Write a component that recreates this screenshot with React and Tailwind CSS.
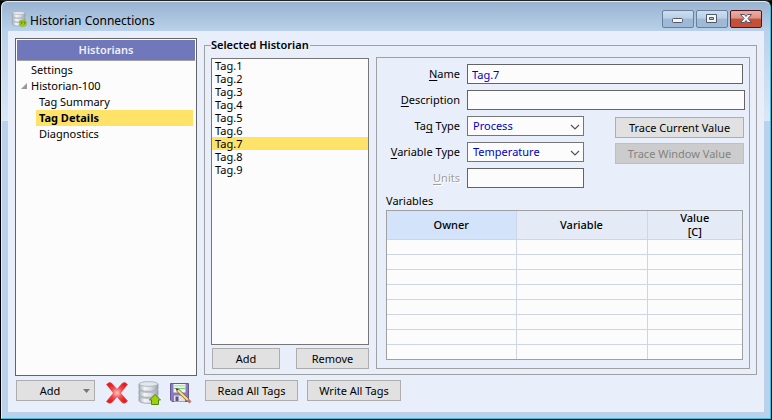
import React from "react";

const BTN = "h-[21px] border border-[#adadad] bg-[#e1e1e1] text-center leading-[19px]";
const FIELD = "h-5 min-w-0 border border-[#646464] bg-[#fcfcfc] px-1 text-[#0000c8] outline-none";

function DatabaseIcon({ className, badge }) {
  return (
    <svg className={className} viewBox="0 0 24 24" aria-hidden="true">
      <defs>
        <linearGradient id="metal" x1="0" x2="1">
          <stop offset="0" stopColor="#aab1ba" />
          <stop offset="0.3" stopColor="#f4f6f9" />
          <stop offset="0.65" stopColor="#d6dbe1" />
          <stop offset="1" stopColor="#9aa2ac" />
        </linearGradient>
      </defs>
      {[16, 10, 4].map((y) => (
        <g key={y}>
          <path d={`M2 ${y - 1}v4.500c0 1.700 4.200 2.800 9.500 2.800s9.500-1.100 9.500-2.800v-4.500z`} fill="url(#metal)" stroke="#9098a3" strokeWidth="0.8" />
          <ellipse cx="11.5" cy={y - 1} rx="9.5" ry="2.4" fill="#e3e7eb" stroke="#9aa2ac" strokeWidth="0.7" />
        </g>
      ))}
      {badge === "up" ? (
        <path d="M18 13.500l5.500 5.500h-2v4.500h-7v-4.500h-2z" fill="#9bd10d" stroke="#55860b" strokeWidth="1" />
      ) : (
        <g>
          <rect x="12.500" y="14" width="10.500" height="9" rx="3" fill="#a4cc22" stroke="#8db524" />
          <path d="M14 16.500h3l-2 4M18.500 16.500h3l-2 4" fill="none" stroke="#5d7d18" strokeWidth="1.300" />
        </g>
      )}
    </svg>
  );
}

function DeleteIcon() {
  return (
    <svg className="h-6 w-6" viewBox="0 0 24 24" aria-hidden="true">
      <defs>
        <radialGradient id="red">
          <stop offset="0" stopColor="#ffc4c0" />
          <stop offset="0.55" stopColor="#f04a4a" />
          <stop offset="1" stopColor="#e41e22" />
        </radialGradient>
      </defs>
      <path d="M1.500 3.500Q4.500 0 7 2.500L12 8.500L17 2.500Q20 0 22.500 3.500L15.500 12L22.500 20Q20 23.500 17 21.500L12 15.500L7 21.500Q4 23.500 1.500 20.500L8.500 12Z" fill="url(#red)" stroke="#e5383a" strokeWidth="0.6" />
    </svg>
  );
}

function SaveIcon() {
  return (
    <svg className="h-6 w-6" viewBox="0 0 24 24" aria-hidden="true">
      <path d="M1.500 2.500h18v18H3l-1.500-1.500z" fill="#8b79bd" stroke="#69589c" />
      <path d="M4.500 3h12v8.500h-12z" fill="#f1f8f1" />
      <path d="M4.500 4h12v1.500h-12z" fill="#b4e6ba" />
      <path d="M4.500 7.500h12" stroke="#7bd388" strokeWidth="1.200" />
      <path d="M5 14.500h11v6H5z" fill="#e2e2e8" />
      <path d="M6.500 15.500h3v4.500h-3z" fill="#5b5480" />
      <path d="M8.500 9l10.500 10" stroke="#7d6327" strokeWidth="3.400" />
      <path d="M8.500 9l10.500 10" stroke="#f6dc8c" strokeWidth="2.200" />
      <path d="M18.800 18.800l2.700 2.700" stroke="#b9777a" strokeWidth="3" />
      <path d="M6.500 7l3.500.900-2.300 2.200z" fill="#4a3b2c" />
    </svg>
  );
}

function WindowButton({ label, close, children }) {
  const tone = close
    ? "border-[#4a1624] bg-linear-to-b from-[#e9a99c] from-10% via-[#dc9183] via-45% to-[#c4503a] to-50%"
    : "border-[#6a7f9c] bg-linear-to-b from-[#c9dbee] from-10% via-[#b9cfe6] via-45% to-[#9db9d6] to-50%";
  return (
    <button aria-label={label} className={"flex h-[18px] w-8 items-center justify-center rounded-xs border " + tone}>
      <svg className="h-4 w-[30px]" viewBox="0 0 30 16" aria-hidden="true">{children}</svg>
    </button>
  );
}

function Label({ id, before = "", k, rest, disabled }) {
  return (
    <label htmlFor={id} className={"w-[74px] shrink-0 text-right whitespace-nowrap " + (disabled ? "text-[#a0a0a0] [text-shadow:1px_1px_0_#fff]" : "")}>
      {before}<span className="underline underline-offset-2">{k}</span>{rest}
    </label>
  );
}

function Select({ id, value, options }) {
  return (
    <div className="relative w-[117px]">
      <select id={id} defaultValue={value} className="h-5 w-full appearance-none border border-[#767676] bg-[#fcfcfc] px-[5px] text-[#0000c8] outline-none">
        {options.map((o) => <option key={o}>{o}</option>)}
      </select>
      <svg className="pointer-events-none absolute top-[7px] right-[3px] h-2 w-3" viewBox="0 0 12 8" aria-hidden="true">
        <path d="M2 2l4 4 4-4" fill="none" stroke="#555" strokeWidth="1.2" />
      </svg>
    </div>
  );
}

export default function App() {
  return (
    <div className="flex min-h-screen flex-col border border-t-[#222] border-r-black border-b-black border-l-black bg-black font-['Noto_Sans','Segoe_UI',sans-serif] text-[11px] leading-4 text-black">
      <div className="flex grow flex-col rounded-t-md border border-t-[#dfeaf5] border-r-[#25c9e6] border-b-[#25c9e6] border-l-[#e4eef8] bg-[linear-gradient(to_bottom,#b9d1ea_30px,#dbe8f6_119px,#b9d1ea_119px)] px-1.5 pb-1.5">
        <header className="-mx-1.5 flex h-[29px] items-center rounded-t-md bg-linear-to-b from-[#99b4d1] to-[#b9d1ea] pt-[5px] pr-2 pl-[9px]">
          <DatabaseIcon className="h-4 w-4" badge="link" />
          <h1 className="grow pt-1 pl-[3px] text-xs">Historian Connections</h1>
          <div className="flex gap-0.5">
            <WindowButton label="Minimize">
              <rect x="9.500" y="7.500" width="10" height="4" rx="1" fill="#f6f6f6" stroke="#535666" />
            </WindowButton>
            <WindowButton label="Maximize">
              <path d="M9.500 3.500h10v8h-10zM12.500 6.500v2h4v-2z" fill="#f6f6f6" fillRule="evenodd" stroke="#535666" />
            </WindowButton>
            <WindowButton label="Close" close>
              <path d="M9.500 3.500h4l1.500 2 1.500-2h4l-3.500 4 3.500 4h-4l-1.500-2-1.500 2h-4l3.500-4z" fill="#f6f6f6" stroke="#535666" />
            </WindowButton>
          </div>
        </header>

        <main className="flex grow flex-col bg-[#e8effa] px-[7px] pt-[7px] pb-[11px]">
          <div className="flex grow gap-[7px]">
            <nav className="w-[182px] shrink-0 border border-[#646464] bg-[#fcfcfc] p-px">
              <h2 className="h-[21px] border-b border-[#a0a0a0] bg-[#7077bb] text-center leading-5 font-semibold text-[#eef0fa]">Historians</h2>
              <ul className="pt-px pr-0.5">
                <li className="pl-3.5">Settings</li>
                <li>
                  <div className="flex items-center">
                    <svg className="mx-1 h-1.5 w-1.5" viewBox="0 0 6 6" aria-hidden="true"><path d="M6 0v6H0z" fill="#999" /></svg>
                    Historian-100
                  </div>
                  <ul className="pl-[19px]">
                    <li className="pl-[3px]">Tag Summary</li>
                    <li className="bg-[#ffe268] pl-[3px] font-bold" aria-current="page">Tag Details</li>
                    <li className="pl-[3px]">Diagnostics</li>
                  </ul>
                </li>
              </ul>
            </nav>

            <fieldset className="mb-px flex min-w-0 grow gap-[7px] border border-[#a0a0a0] px-1.5 py-[5px]">
              <legend className="pr-px leading-[14px] font-semibold">Selected Historian</legend>
              <section className="flex w-[158px] shrink-0 flex-col pt-px">
                <ul className="grow border border-[#767676] bg-[#fcfcfc] leading-[13px]">
                  {[1, 2, 3, 4, 5, 6, 7, 8, 9].map((n) => (
                    <li key={n} className={n === 7 ? "bg-[#ffe268] px-[3px]" : "px-[3px]"}>Tag.{n}</li>
                  ))}
                </ul>
                <div className="mt-[3px] flex justify-between pl-px">
                  <button className={BTN + " w-[68px]"}>Add</button>
                  <button className={BTN + " w-[73px]"}>Remove</button>
                </div>
              </section>

              <section className="flex min-w-0 grow flex-col border border-[#a0a0a0] pt-1.5 pr-1 pb-2 pl-[9px]">
                <div className="flex flex-col gap-1.5">
                  <div className="flex items-center gap-[7px] pr-0.5">
                    <Label id="name" k="N" rest="ame" />
                    <input id="name" defaultValue="Tag.7" className={FIELD + " grow"} />
                  </div>
                  <div className="flex items-center gap-[7px]">
                    <Label id="description" k="D" rest="escription" />
                    <input id="description" className={FIELD + " grow"} />
                  </div>
                  <div className="flex justify-between pr-px">
                    <div className="flex flex-col gap-1.5">
                      <div className="flex items-center gap-[7px]">
                        <Label id="tagtype" before="Ta" k="g" rest=" Type" />
                        <Select id="tagtype" value="Process" options={["Process"]} />
                      </div>
                      <div className="flex items-center gap-[7px]">
                        <Label id="vartype" k="V" rest="ariable Type" />
                        <Select id="vartype" value="Temperature" options={["Temperature"]} />
                      </div>
                      <div className="flex items-center gap-[7px]">
                        <Label id="units" k="U" rest="nits" disabled />
                        <input id="units" className={FIELD + " w-[117px]"} />
                      </div>
                    </div>
                    <div className="flex flex-col gap-[5px] pt-px">
                      <button className={BTN + " w-[129px]"}>Trace Current Value</button>
                      <button disabled className="h-[21px] w-[129px] border border-[#bfbfbf] bg-[#cccccc] leading-[19px] text-[#838383]">Trace Window Value</button>
                    </div>
                  </div>
                </div>
                <h3 className="mt-[5px] mb-px">Variables</h3>
                <div className="mr-0.5 border border-[#a0a0a0] bg-[#fcfcfc]">
                  <table className="w-full table-fixed border-collapse" aria-label="Variables">
                    <colgroup><col className="w-[129px]" /><col className="w-[131px]" /><col /></colgroup>
                    <thead>
                      <tr className="h-7 border-b border-[#cdd5e6] bg-[#e4ebf6]">
                        <th className="border-r border-[#cdd5e6] bg-[#d3e3fa] p-0 font-medium">Owner</th>
                        <th className="border-r border-[#cdd5e6] p-0 font-medium">Variable</th>
                        <th className="p-0 leading-[14px] font-medium">Value<br />[C]</th>
                      </tr>
                    </thead>
                    <tbody>
                      {[0, 1, 2, 3, 4, 5, 6, 7].map((r) => (
                        <tr key={r} className="h-[15px] border-b border-[#cdd5e6] last:h-3.5 last:border-b-0">
                          <td className="border-r border-[#cdd5e6] p-0" />
                          <td className="border-r border-[#cdd5e6] p-0" />
                          <td className="p-0" />
                        </tr>
                      ))}
                    </tbody>
                  </table>
                </div>
              </section>
            </fieldset>
          </div>

          <footer className="mt-1 flex pl-px">
            <button className={BTN + " flex w-[79px] items-center"}>
              <span className="grow">Add</span>
              <svg className="mr-1 h-1 w-[7px]" viewBox="0 0 7 4" aria-hidden="true"><path d="M0 0h7L3.500 4z" fill="#777" /></svg>
            </button>
            <div className="-mb-1 flex w-[110px] gap-2 pl-2.5">
              <button aria-label="Delete"><DeleteIcon /></button>
              <button aria-label="Upload to database"><DatabaseIcon className="h-6 w-6" badge="up" /></button>
              <button aria-label="Save"><SaveIcon /></button>
            </div>
            <button className={BTN + " w-[93px]"}>Read All Tags</button>
            <button className={BTN + " ml-[9px] w-[94px]"}>Write All Tags</button>
          </footer>
        </main>
      </div>
    </div>
  );
}
